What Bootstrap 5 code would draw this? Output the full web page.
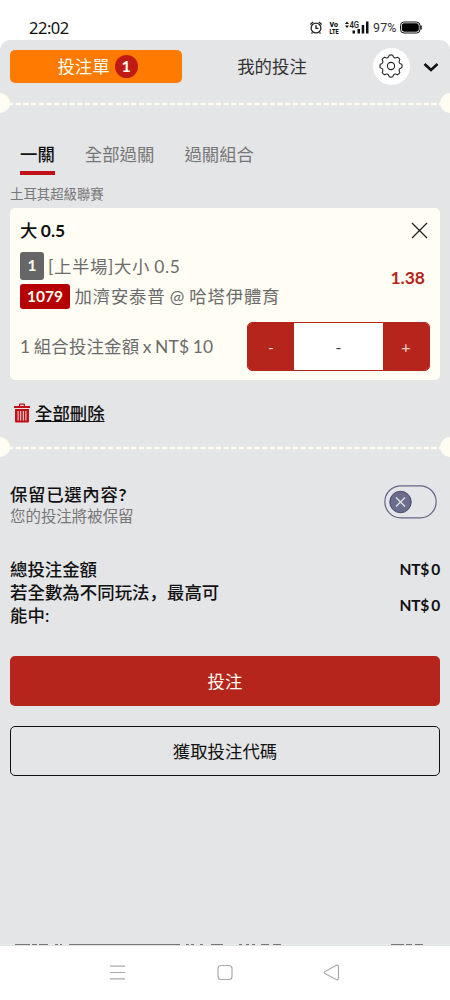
<!DOCTYPE html>
<html lang="zh-Hant">
<head>
<meta charset="utf-8">
<meta name="viewport" content="width=device-width, initial-scale=1">
<title>投注單</title>
<link href="https://cdn.jsdelivr.net/npm/bootstrap@5.3.0/dist/css/bootstrap.min.css" rel="stylesheet">
<style>
body{font-family:Lato,"Noto Sans CJK TC",sans-serif;font-size:17.4px;line-height:23px;color:#111;background:#fff}
.screen{width:450px;height:1000px;overflow:hidden}
.status{height:40px;padding:15px 28px 0 29px;font:16.5px/25px "Noto Sans","Noto Sans CJK TC",sans-serif;letter-spacing:-.5px}
.slip{height:904px;background:#e4e5e7;border-radius:10px 10px 0 0;padding-top:9px}
.head{height:34px;margin-left:10px;margin-right:10px}
.slip-tab{width:172px;height:33px;background:#ff7a00;color:#fffdf2;border-radius:5px;padding-left:3px}
.count{width:23px;height:23px;background:#c01a14;font-weight:700;font-size:16px;margin-left:5px;padding-bottom:1px}
.mine{width:180px;color:#333}
.gear{width:37px;height:37px;margin-left:10.5px}
.perf{height:20px;margin-top:10px}
.perf svg{display:block}
.modes{height:36px;gap:30px;padding-left:20px;margin-top:29px;color:#777}
.modes a{color:inherit;text-decoration:none;padding-top:1px;height:33px}
.modes a.on{color:#111;font-weight:500;border-bottom:4px solid #c01118}
.league{font-size:13.4px;line-height:20px;margin:6px 0 4px 10px;color:#777}
.bet{margin:0 10px;height:172px;background:#fffdf4;border-radius:5px;padding:11px 10px 10px;color:#6b6b6b}
.pick{color:#111;font-weight:500;height:23px}
.pick b,.odds{font-weight:700}
.pick span{word-spacing:-1px}
.tag{color:#fffdf2;font-weight:700;font-size:15.5px;border-radius:3px;padding-bottom:1px}
.tag-n{width:24px;height:28px;background:#666}
.tag-id{width:50px;height:25px;background:#b40000}
.row-a{letter-spacing:.65px;word-spacing:-1px}
.row-b{letter-spacing:.8px;word-spacing:-1px}
.odds{color:#b5251b;font-size:17.5px;margin-right:5px}
.stepper{width:183px;height:49px;border:1px solid #b5251b;border-radius:5px;background:#fff;color:#333;overflow:hidden;font-size:16px}
.stepper button{width:46px;border:0;background:#b5251b;color:#eecfc5;padding:0}
.stake{letter-spacing:.2px;word-spacing:-1.2px}
.del{margin:22px 0 0 14px;height:23px;gap:5px;font-weight:500}
.keep{margin:26px 13.5px 0 10px;height:46px}
.keep-q{font-weight:500;letter-spacing:.7px}
.keep-s{font-size:15.45px;line-height:20px;color:#777}
.sums{margin:29px 10px 0;font-weight:500}
.sums .long{width:215px;font-family:Lato,"Noto Sans CJK TC",sans-serif;letter-spacing:.05px}
.money{font-weight:700;font-size:15.5px;letter-spacing:-.2px;word-spacing:-1.5px}
.wide{height:50px;margin:0 10px;border-radius:5px}
.go{background:#b5251b;color:#fffdf2}
.code{border:1px solid #111;color:#111}
.sysnav{height:56px}
</style>
</head>
<body>
<div class="screen">
  <div class="status d-flex justify-content-between">
    <span>22:02</span>
    <svg width="116" height="26" viewBox="307 15 116 26" style="letter-spacing:0;margin-right:-1px">
      <g fill="none" stroke="#222" stroke-width="1.300"><circle cx="316" cy="28" r="4.900"/><path d="M316 25v3.300h2.500M310.300 24.500l2.800-2.500M321.700 24.500l-2.800-2.500M312.500 32.500l-1 1M319.500 32.500l1 1"/></g>
      <g fill="#111" font-family="Roboto, sans-serif" font-weight="900"><text x="329.500" y="26.500" font-size="6.500" textLength="8.500" lengthAdjust="spacingAndGlyphs">Vo</text><text x="329.500" y="34" font-size="6.500" textLength="9" lengthAdjust="spacingAndGlyphs">LTE</text><text x="349.500" y="28" font-size="9" font-weight="500" textLength="9.500" lengthAdjust="spacingAndGlyphs">4G</text></g>
      <path fill="#111" d="M345 24l2-2.500 2 2.500zM345 25.500h4l-2 2.500zM352.500 30.500h2.500v3h-2.500zM357.500 29h2.500v4.500h-2.500zM361.700 25h2.500v8.500h-2.500zM366 21.500h2.500v12h-2.500z"/>
      <text x="373" y="31.500" font-family="Roboto, sans-serif" font-size="12.500" fill="#333" textLength="23.500">97%</text>
      <rect x="400.500" y="22" width="19.500" height="11" rx="3.500" fill="none" stroke="#111" stroke-width="1"/><rect x="401.800" y="23.300" width="17" height="8.400" rx="2.400" fill="#000"/><path d="M421 25.500v4" stroke="#111" stroke-width="1.500"/>
    </svg>
  </div>

  <main class="slip">
    <div class="head d-flex align-items-center">
      <div class="slip-tab d-flex align-items-center justify-content-center"><span>投注單</span><span class="count rounded-circle d-flex align-items-center justify-content-center">1</span></div>
      <div class="mine text-center">我的投注</div>
      <div class="gear rounded-circle bg-white d-flex align-items-center justify-content-center">
        <svg width="24" height="24" viewBox="-12 -12 24 24" fill="none" stroke="#222" stroke-width="1.100" stroke-linejoin="round"><circle r="3.600"/><path id="cog" d=""/></svg>
      </div>
      <svg class="ms-auto" width="16" height="12" viewBox="0 0 16 12" style="margin:2px 1px 0 0" fill="none" stroke="#111" stroke-width="2.600"><path d="M1.500 3L8 9l6.500-6"/></svg>
    </div>

    <div class="perf"><svg width="450" height="20"><path d="M8 11H442" stroke="#fffdf2" stroke-width="2.600" stroke-dasharray="5.100 2.600"/><circle cy="10" r="10" fill="#fffdf2"/><circle cx="450" cy="10" r="10" fill="#fffdf2"/></svg></div>

    <nav class="modes d-flex"><a class="on">一關</a><a>全部過關</a><a>過關組合</a></nav>
    <div class="league">土耳其超級聯賽</div>

    <section class="bet">
      <div class="pick d-flex justify-content-between"><span>大 <b>0.5</b></span>
        <svg width="17" height="17" viewBox="0 0 17 17" style="margin:3px 2px 0 0" stroke="#222" stroke-width="1.300"><path d="M1 1l15 15M16 1L1 16"/></svg></div>
      <div class="d-flex justify-content-between align-items-center" style="height:57px;margin-top:10px">
        <div>
          <div class="d-flex align-items-center" style="gap:4px"><span class="tag tag-n d-flex align-items-center justify-content-center">1</span><span class="row-a">[上半場]大小 0.5</span></div>
          <div class="d-flex align-items-center" style="gap:4.5px;margin-top:4px"><span class="tag tag-id d-flex align-items-center justify-content-center">1079</span><span class="row-b">加濟安泰普 @ 哈塔伊體育</span></div>
        </div>
        <span class="odds" style="margin-top:-6px">1.38</span>
      </div>
      <div class="d-flex justify-content-between align-items-center" style="margin-top:13px">
        <span class="stake">1 組合投注金額 x NT$ 10</span>
        <div class="stepper d-flex"><button>-</button><span class="flex-fill d-flex align-items-center justify-content-center">-</span><button>+</button></div>
      </div>
    </section>

    <div class="del d-flex align-items-center">
      <svg width="16" height="21" viewBox="0 0 16 21"><path fill="#c01118" fill-rule="evenodd" d="M0 3h5V1.500Q5 .5 6 .5h4q1 0 1 1V3h5v2H0zM6.300 1.800V3h3.400V1.800zM1 6h14v12.500q0 1-1 1H2q-1 0-1-1zM3.600 8v9.500h1V8zm2.600 0v9.500h1V8zm2.600 0v9.500h1V8zm2.600 0v9.500h1V8z"/></svg>
      <span class="text-decoration-underline">全部刪除</span>
    </div>

    <div class="perf" style="margin-top:12px"><svg width="450" height="20"><path d="M8 11H442" stroke="#fffdf2" stroke-width="2.600" stroke-dasharray="5.100 2.600"/><circle cy="10" r="10" fill="#fffdf2"/><circle cx="450" cy="10" r="10" fill="#fffdf2"/></svg></div>

    <div class="keep d-flex justify-content-between">
      <div><div class="keep-q">保留已選內容<b>?</b></div><div class="keep-s">您的投注將被保留</div></div>
      <svg width="53" height="34" viewBox="0 0 53 34" style="margin-top:2px"><rect x=".8" y=".8" width="51.400" height="32" rx="16" fill="none" stroke="#666487" stroke-width="1.200"/><circle cx="16.500" cy="17" r="10.700" fill="#6c6d8d" stroke="#47466d"/><path d="M12 12.500l9 9M21 12.500l-9 9" stroke="#e4e5e8" stroke-width="1.300"/></svg>
    </div>

    <div class="sums">
      <div class="d-flex justify-content-between"><span>總投注金額</span><span class="money">NT$ 0</span></div>
      <div class="d-flex justify-content-between align-items-center"><span class="long">若全數為不同玩法<span lang="zh-Hans" style="font-family:'Noto Sans CJK SC',sans-serif;line-height:1">，</span>最高可能中:</span><span class="money" style="margin-top:2px">NT$ 0</span></div>
    </div>

    <div class="wide go d-flex align-items-center justify-content-center" style="margin-top:29px">投注</div>
    <div class="wide code d-flex align-items-center justify-content-center" style="margin-top:20px">獲取投注代碼</div>
  </main>

  <div class="sysnav">
    <svg width="450" height="56" viewBox="0 944 450 56" fill="none" stroke="#aaa" stroke-width="1.200">
      <path d="M0 945.200H450" stroke="#d5d8d8"/>
      <path d="M15 944.500H30M32 944.500h5M39 944.500h9M55 944.500h3M60 944.500h2M69 944.500H180M186 944.500h3M191 944.500h3M200 944.500h3M211 944.500h12M239 944.500h3M246 944.500h3M252 944.500h3M261 944.500h8M273 944.500h8M391 944.500h13M406 944.500h6M415 944.500h8" stroke="#777" stroke-width="1"/>
      <path d="M110 966.200h15M110 972.500h15M110 978.800h15"/>
      <rect x="218" y="965.500" width="14" height="14" rx="3"/>
      <path d="M325 971.500l11-6q2.500-1 2.500 1.500v11q0 2.500-2.500 1.500l-11-6q-1.500-1 0-2z"/>
    </svg>
  </div>
</div>
<script src="https://cdn.jsdelivr.net/npm/bootstrap@5.3.0/dist/js/bootstrap.bundle.min.js"></script>
<script>
// Eight-tooth cog outline
let d = '';
for (let i = 0; i < 8; i++) {
  const p = (r, deg) => { const a = (i * 45 + deg) * Math.PI / 180; return (r * Math.cos(a)).toFixed(2) + ' ' + (r * Math.sin(a)).toFixed(2); };
  d += (i ? 'L' : 'M') + p(10.9, -9) + 'Q' + p(11.4, 0) + ' ' + p(10.9, 9) + 'Q' + p(7.2, 22.5) + ' ' + p(10.9, 36);
}
document.getElementById('cog').setAttribute('d', d + 'Z');
</script>
</body>
</html>
